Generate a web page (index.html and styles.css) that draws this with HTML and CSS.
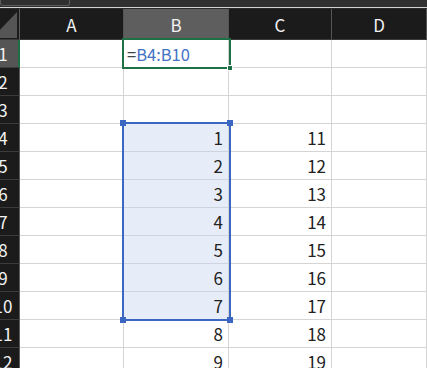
FILE: index.html
```html
<!DOCTYPE html>
<html lang="ja">
<head>
  <meta charset="UTF-8">
  <title>Sheet</title>
  <link rel="stylesheet" href="styles.css">
</head>
<body>

  <div class="toolbar">
    <div class="namebox"><span class="caret">&#9662;</span></div>
  </div>
  <div class="toolbar-line"></div>

  <div class="sheet">
    <div class="grid">
      <!-- header row -->
      <div class="corner">
        <svg width="20" height="31" viewBox="0 0 20 31"><polygon points="17,3 17,29 -8,29" fill="#555"/></svg>
      </div>
      <div class="ch">A</div>
      <div class="ch ch-active">B</div>
      <div class="ch">C</div>
      <div class="ch">D</div>

      <!-- rows -->
      <div class="rh rh-active"><span>1</span></div>
      <div class="cell"></div><div class="cell"></div><div class="cell"></div><div class="cell"></div>

      <div class="rh"><span>2</span></div>
      <div class="cell"></div><div class="cell"></div><div class="cell"></div><div class="cell"></div>

      <div class="rh"><span>3</span></div>
      <div class="cell"></div><div class="cell"></div><div class="cell"></div><div class="cell"></div>

      <div class="rh"><span>4</span></div>
      <div class="cell"></div><div class="cell num sel">1</div><div class="cell num">11</div><div class="cell"></div>

      <div class="rh"><span>5</span></div>
      <div class="cell"></div><div class="cell num sel">2</div><div class="cell num">12</div><div class="cell"></div>

      <div class="rh"><span>6</span></div>
      <div class="cell"></div><div class="cell num sel">3</div><div class="cell num">13</div><div class="cell"></div>

      <div class="rh"><span>7</span></div>
      <div class="cell"></div><div class="cell num sel">4</div><div class="cell num">14</div><div class="cell"></div>

      <div class="rh"><span>8</span></div>
      <div class="cell"></div><div class="cell num sel">5</div><div class="cell num">15</div><div class="cell"></div>

      <div class="rh"><span>9</span></div>
      <div class="cell"></div><div class="cell num sel">6</div><div class="cell num">16</div><div class="cell"></div>

      <div class="rh"><span>10</span></div>
      <div class="cell"></div><div class="cell num sel">7</div><div class="cell num">17</div><div class="cell"></div>

      <div class="rh"><span>11</span></div>
      <div class="cell"></div><div class="cell num">8</div><div class="cell num">18</div><div class="cell"></div>

      <div class="rh"><span>12</span></div>
      <div class="cell"></div><div class="cell num">9</div><div class="cell num">19</div><div class="cell"></div>
    </div>

    <!-- selection overlays, same track layout as the grid -->
    <div class="grid overlay">
      <div class="range">
        <i class="hd hd-tl"></i><i class="hd hd-tr"></i><i class="hd hd-bl"></i><i class="hd hd-br"></i>
      </div>
      <div class="active-cell">
        <span class="eq">=</span><span class="ref">B4:B10</span>
        <i class="fill-handle"></i>
      </div>
    </div>
  </div>

</body>
</html>
```

FILE: styles.css
```css
* {
  margin: 0;
  padding: 0;
  box-sizing: border-box;
}

body {
  width: 427px;
  height: 368px;
  overflow: hidden;
  background: #fff;
  font-family: 'Noto Sans CJK JP', 'Noto Sans', sans-serif;
}

.toolbar {
  height: 7px;
  background: #303030;
  display: flex;
}

.namebox {
  width: 70px;
  height: 6px;
  border: 1px solid #5c5c5c;
  border-top: none;
  border-radius: 0 0 3px 3px;
  position: relative;
  overflow: hidden;
}

.caret {
  position: absolute;
  right: 4px;
  top: -9px;
  font-size: 9px;
  line-height: 12px;
  color: #bbb;
}

.toolbar-line {
  height: 2px;
  background: #d2d2d2;
  border-bottom: 1px solid #2a2a2a;
}

.sheet {
  display: grid;
}

.grid {
  grid-area: 1 / 1;
  display: grid;
  grid-template-columns: 20px 104px 105px 103px 1fr;
  grid-template-rows: 31px repeat(12, 28px);
}

.overlay {
  pointer-events: none;
}

.corner {
  background: #1b1b1b;
  border-right: 1px solid #5a5a5a;
  border-bottom: 1px solid #3a3a3a;
  overflow: hidden;
}

.corner svg {
  display: block;
}

.ch {
  display: flex;
  align-items: center;
  justify-content: center;
  background: #1b1b1b;
  color: #f2f2f2;
  font-size: 17px;
  border-right: 1px solid #555;
  border-bottom: 1px solid #3a3a3a;
}

.ch-active {
  background: #5e5e5e;
}

.rh {
  background: #1b1b1b;
  color: #f2f2f2;
  font-size: 17px;
  border-right: 1px solid #5a5a5a;
  border-bottom: 1px solid #3c3c3c;
  overflow: hidden;
  display: flex;
  align-items: center;
}

.rh span {
  display: block;
  flex: none;
  width: 32px;
  margin-left: -13px;
  text-align: center;
}

.rh-active {
  background: #555;
  border-right: 2px solid #1e7145;
}

.cell {
  border-right: 1px solid #d5d5d5;
  border-bottom: 1px solid #d5d5d5;
  font-size: 17px;
  color: #222;
  display: flex;
  align-items: center;
}

.num {
  justify-content: flex-end;
  padding-right: 5px;
}

.sel {
  background: #e7edf8;
  border-bottom-color: #cdd4e0;
}

.range {
  grid-column: 3;
  grid-row: 5 / 12;
  margin: -2px -2px -1px -2px;
  border: 2px solid #3b66c1;
  position: relative;
}

.hd {
  position: absolute;
  width: 6px;
  height: 6px;
  background: #3b66c1;
}

.hd-tl { left: -4px; top: -4px; }
.hd-tr { right: -4px; top: -4px; }
.hd-bl { left: -4px; bottom: -4px; }
.hd-br { right: -4px; bottom: -4px; }

.active-cell {
  grid-column: 3;
  grid-row: 2;
  margin: -2px -2px -1px -2px;
  border: 2px solid #1e7145;
  position: relative;
  display: flex;
  align-items: center;
  padding-left: 3px;
  font-size: 16.5px;
}

.eq {
  color: #444;
}

.ref {
  color: #4472c4;
}

.fill-handle {
  position: absolute;
  right: -4px;
  bottom: -4px;
  width: 6px;
  height: 6px;
  background: #1e7145;
  border: 1px solid #fff;
}
```
